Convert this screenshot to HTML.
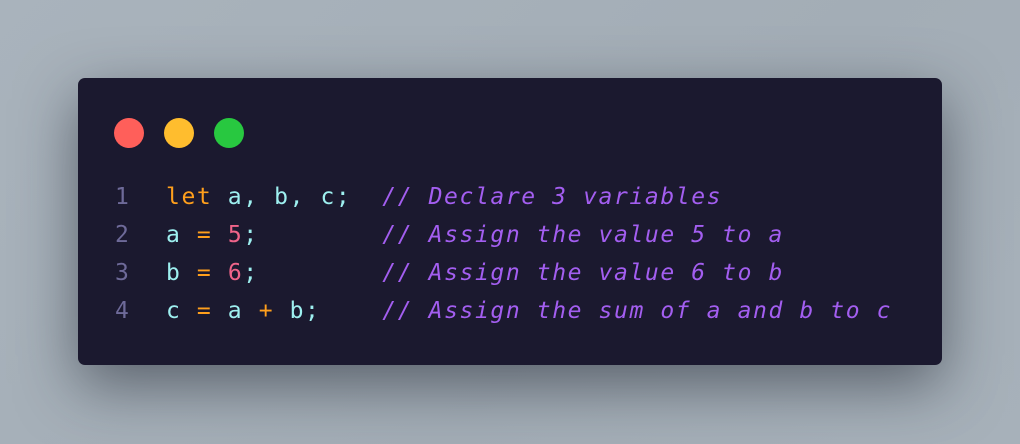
<!DOCTYPE html>
<html><head><style>
html,body{margin:0;padding:0}
body{width:1020px;height:444px;overflow:hidden;background:linear-gradient(135deg,#a9b3bc,#a3adb6 60%,#a7b1ba);position:relative}
.card{position:absolute;left:78px;top:78px;width:864px;height:287px;background:#1b192f;border-radius:7px;box-shadow:0 20px 60px rgba(30,35,45,.55)}
.dot{position:absolute;top:40px;width:30px;height:30px;border-radius:50%}
pre{position:absolute;top:100px;margin:0;font-family:"DejaVu Sans Mono","Liberation Mono",monospace;font-size:23px;letter-spacing:1.6px;line-height:38px;color:#9ef0f0}
.n{color:#6e6a99}.k{color:#ff9f1c}.o{color:#ff9f1c}.num{color:#f0648a}.c{color:#a35ef0;font-style:italic}
</style></head><body>
<div class="card">
<div class="dot" style="left:36px;background:#ff5f5a"></div>
<div class="dot" style="left:86px;background:#ffbd2e"></div>
<div class="dot" style="left:136px;background:#28c840"></div>
<pre class="n" style="left:37px">1
2
3
4</pre>
<pre style="left:88px"><span class="k">let</span> a, b, c;  <span class="c">// Declare 3 variables</span>
a <span class="o">=</span> <span class="num">5</span>;        <span class="c">// Assign the value 5 to a</span>
b <span class="o">=</span> <span class="num">6</span>;        <span class="c">// Assign the value 6 to b</span>
c <span class="o">=</span> a <span class="o">+</span> b;    <span class="c">// Assign the sum of a and b to c</span></pre>
</div>
</body></html>
